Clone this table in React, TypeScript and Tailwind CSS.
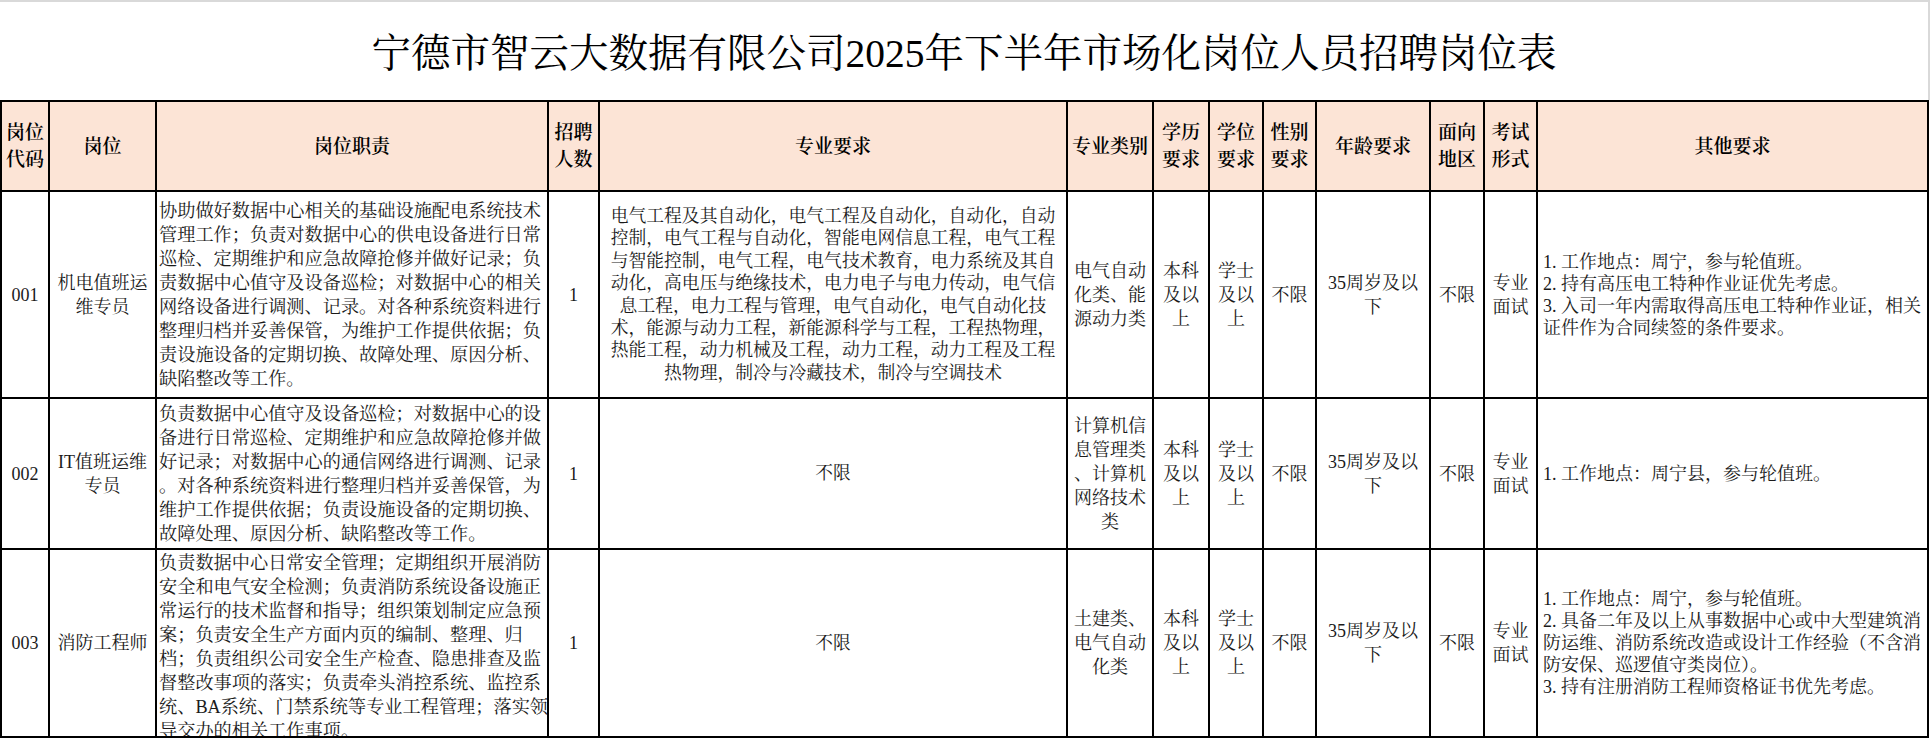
import React from "react";

const FONT = {
  fontFamily:
    "'Liberation Serif', 'Noto Serif CJK SC', 'Noto Sans CJK SC', serif",
};

type CellProps = {
  children?: React.ReactNode;
  className?: string;
};

function Cell({ children, className = "" }: CellProps) {
  return (
    <div
      className={
        "border-r-2 border-b-2 border-black flex overflow-hidden min-w-0 " +
        className
      }
    >
      {children}
    </div>
  );
}

function Lines({ lines, className = "" }: { lines: string[]; className?: string }) {
  return (
    <div className={className}>
      {lines.map((l, i) => (
        <div key={i} className="whitespace-nowrap">
          {l}
        </div>
      ))}
    </div>
  );
}

function Head({ lines }: { lines: string[] }) {
  return (
    <Cell className="items-center justify-center bg-[#fce4d6]">
      <Lines lines={lines} className="text-center font-semibold text-[19px] leading-[27px] text-black" />
    </Cell>
  );
}

function Center({ lines, leading = "leading-[24px]" }: { lines: string[]; leading?: string }) {
  return (
    <Cell className="items-center justify-center">
      <Lines lines={lines} className={"text-center text-[18px] " + leading} />
    </Cell>
  );
}

type RowData = {
  code: string;
  name: string[];
  duty: string[];
  dutyTop?: boolean;
  num: string;
  major: string[];
  cat: string[];
  other: string[];
};

const rows: RowData[] = [
  {
    code: "001",
    name: ["机电值班运", "维专员"],
    duty: [
      "协助做好数据中心相关的基础设施配电系统技术",
      "管理工作；负责对数据中心的供电设备进行日常",
      "巡检、定期维护和应急故障抢修并做好记录；负",
      "责数据中心值守及设备巡检；对数据中心的相关",
      "网络设备进行调测、记录。对各种系统资料进行",
      "整理归档并妥善保管，为维护工作提供依据；负",
      "责设施设备的定期切换、故障处理、原因分析、",
      "缺陷整改等工作。",
    ],
    num: "1",
    major: [
      "电气工程及其自动化，电气工程及自动化，自动化，自动",
      "控制，电气工程与自动化，智能电网信息工程，电气工程",
      "与智能控制，电气工程，电气技术教育，电力系统及其自",
      "动化，高电压与绝缘技术，电力电子与电力传动，电气信",
      "息工程，电力工程与管理，电气自动化，电气自动化技",
      "术，能源与动力工程，新能源科学与工程，工程热物理，",
      "热能工程，动力机械及工程，动力工程，动力工程及工程",
      "热物理，制冷与冷藏技术，制冷与空调技术",
    ],
    cat: ["电气自动", "化类、能", "源动力类"],
    other: [
      "1. 工作地点：周宁，参与轮值班。",
      "2. 持有高压电工特种作业证优先考虑。",
      "3. 入司一年内需取得高压电工特种作业证，相关",
      "证件作为合同续签的条件要求。",
    ],
  },
  {
    code: "002",
    name: ["IT值班运维", "专员"],
    duty: [
      "负责数据中心值守及设备巡检；对数据中心的设",
      "备进行日常巡检、定期维护和应急故障抢修并做",
      "好记录；对数据中心的通信网络进行调测、记录",
      "。对各种系统资料进行整理归档并妥善保管，为",
      "维护工作提供依据；负责设施设备的定期切换、",
      "故障处理、原因分析、缺陷整改等工作。",
    ],
    num: "1",
    major: ["不限"],
    cat: ["计算机信", "息管理类", "、计算机", "网络技术", "类"],
    other: ["1. 工作地点：周宁县，参与轮值班。"],
  },
  {
    code: "003",
    name: ["消防工程师"],
    duty: [
      "负责数据中心日常安全管理；定期组织开展消防",
      "安全和电气安全检测；负责消防系统设备设施正",
      "常运行的技术监督和指导；组织策划制定应急预",
      "案；负责安全生产方面内页的编制、整理、归",
      "档；负责组织公司安全生产检查、隐患排查及监",
      "督整改事项的落实；负责牵头消控系统、监控系",
      "统、BA系统、门禁系统等专业工程管理；落实领",
      "导交办的相关工作事项。",
    ],
    dutyTop: true,
    num: "1",
    major: ["不限"],
    cat: ["土建类、", "电气自动", "化类"],
    other: [
      "1. 工作地点：周宁，参与轮值班。",
      "2. 具备二年及以上从事数据中心或中大型建筑消",
      "防运维、消防系统改造或设计工作经验（不含消",
      "防安保、巡逻值守类岗位）。",
      "3. 持有注册消防工程师资格证书优先考虑。",
    ],
  },
];

export default function App() {
  return (
    <div className="w-[1930px] h-[738px] overflow-hidden bg-white text-[#1a1a1a]" style={FONT}>
      <div className="h-[100px] border-t-2 border-r-2 border-[#d9d9d9] flex items-center justify-center">
        <div className="text-[39.5px] leading-none pt-[8px] text-black whitespace-nowrap">
          宁德市智云大数据有限公司2025年下半年市场化岗位人员招聘岗位表
        </div>
      </div>
      <div className="w-[1929px] grid grid-cols-[48px_107px_392px_51px_468px_86px_56px_54px_53px_114px_54px_53px_391px] grid-rows-[90px_207px_151px_188px] border-l-2 border-t-2 border-black">
        <Head lines={["岗位", "代码"]} />
        <Head lines={["岗位"]} />
        <Head lines={["岗位职责"]} />
        <Head lines={["招聘", "人数"]} />
        <Head lines={["专业要求"]} />
        <Head lines={["专业类别"]} />
        <Head lines={["学历", "要求"]} />
        <Head lines={["学位", "要求"]} />
        <Head lines={["性别", "要求"]} />
        <Head lines={["年龄要求"]} />
        <Head lines={["面向", "地区"]} />
        <Head lines={["考试", "形式"]} />
        <Head lines={["其他要求"]} />

        {rows.map((r) => (
          <React.Fragment key={r.code}>
            <Center lines={[r.code]} />
            <Center lines={r.name} />
            <Cell className={r.dutyTop ? "items-start justify-start pl-[2px] pt-[1px]" : "items-center justify-start pl-[2px]"}>
              <Lines lines={r.duty} className="text-left text-[18.2px] leading-[24px]" />
            </Cell>
            <Center lines={[r.num]} />
            <Cell className="items-center justify-center">
              <Lines lines={r.major} className="text-center text-[17.8px] leading-[22.4px]" />
            </Cell>
            <Center lines={r.cat} />
            <Center lines={["本科", "及以", "上"]} />
            <Center lines={["学士", "及以", "上"]} />
            <Center lines={["不限"]} />
            <Center lines={["35周岁及以", "下"]} />
            <Center lines={["不限"]} />
            <Center lines={["专业", "面试"]} />
            <Cell className="items-center justify-start pl-[5px]">
              <Lines lines={r.other} className="text-left text-[18px] leading-[22px]" />
            </Cell>
          </React.Fragment>
        ))}
      </div>
    </div>
  );
}
